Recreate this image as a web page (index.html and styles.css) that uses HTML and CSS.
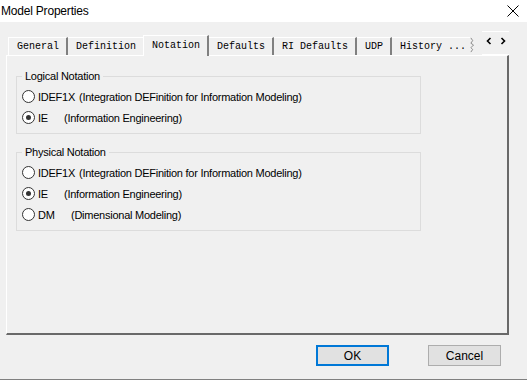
FILE: index.html
```html
<!DOCTYPE html>
<html lang="en">
<head>
    <meta charset="UTF-8">
    <title>Model Properties</title>
    <link rel="stylesheet" href="styles.css">
</head>
<body>

    <!-- Заголовок окна -->
    <div class="titlebar">
        <span class="title">Model Properties</span>
        <svg class="close" width="12" height="12" viewBox="0 0 12 12">
            <path d="M0.5 0.5 L11.5 11.5 M11.5 0.5 L0.5 11.5" stroke="#000" stroke-width="1" fill="none"/>
        </svg>
    </div>

    <div class="dialog">
        <!-- Вкладки -->
        <div class="tabs">
            <div class="tab first">General</div>
            <div class="tab">Definition</div>
            <div class="tab active">Notation</div>
            <div class="tab">Defaults</div>
            <div class="tab">RI Defaults</div>
            <div class="tab">UDP</div>
            <div class="tab last">History ...</div>
            <svg class="torn" width="6" height="16" viewBox="0 0 6 16">
                <path d="M1 0 L3 3 L1 6 L4 8 L1 11 L3 13 L1 16" stroke="#808080" fill="none"/>
            </svg>
            <div class="scroller">
                <svg width="8" height="8" viewBox="0 0 8 8"><path d="M5.5 1 L2.5 4 L5.5 7" stroke="#000" stroke-width="1.6" fill="none"/></svg>
                <svg width="8" height="8" viewBox="0 0 8 8"><path d="M2.5 1 L5.5 4 L2.5 7" stroke="#000" stroke-width="1.6" fill="none"/></svg>
            </div>
        </div>

        <!-- Страница вкладки Notation -->
        <div class="page">
            <fieldset class="group">
                <legend>Logical Notation</legend>
                <label class="option"><span class="radio"></span><span class="code">IDEF1X</span>(Integration DEFinition for Information Modeling)</label>
                <label class="option"><span class="radio checked"></span><span class="code wide">IE</span>(Information Engineering)</label>
            </fieldset>

            <fieldset class="group">
                <legend>Physical Notation</legend>
                <label class="option"><span class="radio"></span><span class="code">IDEF1X</span>(Integration DEFinition for Information Modeling)</label>
                <label class="option"><span class="radio checked"></span><span class="code wide">IE</span>(Information Engineering)</label>
                <label class="option"><span class="radio"></span><span class="code wider">DM</span>(Dimensional Modeling)</label>
            </fieldset>
        </div>

        <!-- Кнопки -->
        <div class="buttons">
            <button class="btn default">OK</button>
            <button class="btn">Cancel</button>
        </div>
    </div>

</body>
</html>
```

FILE: styles.css
```css
body {
    margin: 0;
    padding: 0;
    width: 527px;
    height: 380px;
    overflow: hidden;
    background: #f0f0f0;
    font-family: 'Liberation Sans', Arial, sans-serif;
    font-size: 11px;
    letter-spacing: -0.25px;
    color: #000;
    border-bottom: 1px solid #808080;
    box-sizing: border-box;
}

.titlebar {
    height: 22px;
    background: #fff;
    display: flex;
    align-items: center;
    justify-content: space-between;
    padding: 0 8px 0 1px;
}

.title {
    font-size: 12px;
    letter-spacing: -0.2px;
}

.close {
    margin-top: -1px;
}

.dialog {
    padding: 12px 18px 0 6px;
}

/* вкладки */
.tabs {
    display: flex;
    align-items: flex-end;
    height: 21px;
    font-family: 'Liberation Mono', 'Courier New', monospace;
    font-size: 10px;
    letter-spacing: 0;
    padding-left: 2px;
}

.tab {
    height: 17px;
    line-height: 18px;
    padding: 0 7px 0 8px;
    border-top: 1px solid #fff;
    border-right: 2px solid #808080;
    box-sizing: content-box;
    white-space: pre;
}

.tab.first {
    border-left: 1px solid #fff;
}

.tab.active {
    height: 20px;
    line-height: 20px;
    border-left: 1px solid #fff;
    margin-left: -2px;
    padding: 0 7px 0 8px;
    position: relative;
    top: 1px;
    background: #f0f0f0;
}

.tab.last {
    border-right: none;
    padding-right: 4px;
}

.torn {
    margin: 0 7px 2px 0;
}

.scroller {
    display: flex;
    gap: 6px;
    align-items: center;
    justify-content: center;
    align-self: stretch;
    width: 30px;
    margin-top: -3px;
    border-top: 1px solid #fff;
    border-bottom: 1px solid #fff;
    padding-bottom: 4px;
    box-sizing: border-box;
}

.page {
    height: 280px;
    border-top: 1px solid #fff;
    border-left: 1px solid #fff;
    border-right: 2px solid #696969;
    border-bottom: 2px solid #696969;
    padding: 14px 0 0 9px;
    box-sizing: border-box;
}

.group {
    width: 405px;
    box-sizing: border-box;
    margin: 0 0 12px 0;
    padding: 4px 0 5px 5px;
    border: 1px solid #dcdcdc;
    min-width: 0;
}

.group legend {
    padding: 0 3px 0 3px;
    margin-left: 0;
    font-size: 11px;
}

.option {
    display: flex;
    align-items: center;
    height: 21px;
}

.radio {
    width: 11px;
    height: 11px;
    border: 1px solid #333;
    border-radius: 50%;
    background: #fff;
    margin-right: 3px;
    position: relative;
}

.radio.checked::after {
    content: "";
    position: absolute;
    left: 3px;
    top: 3px;
    width: 5px;
    height: 5px;
    border-radius: 50%;
    background: #333;
}

.code {
    margin-right: 4px;
}

.code.wide {
    width: 22px;
}

.code.wider {
    width: 29px;
}

/* кнопки */
.buttons {
    display: flex;
    justify-content: flex-end;
    gap: 39px;
    margin-top: 10px;
    padding-right: 8px;
}

.btn {
    width: 73px;
    height: 21px;
    background: #e1e1e1;
    border: 1px solid #adadad;
    font-family: 'Liberation Sans', Arial, sans-serif;
    font-size: 12px;
    padding: 0;
    color: #000;
}

.btn.default {
    border: 2px solid #0078d7;
}
```
